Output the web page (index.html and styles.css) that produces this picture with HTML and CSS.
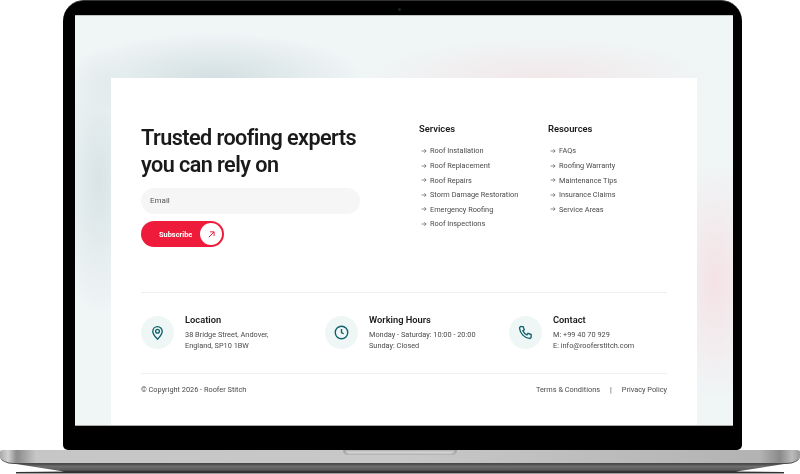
FILE: index.html
```html
<!DOCTYPE html>
<html lang="en">
<head>
<meta charset="utf-8">
<title>Roofer Stitch</title>
<link rel="stylesheet" href="styles.css">
</head>
<body>
<div class="stage">
  <div class="lid">
    <span class="camera"></span>
    <div class="screen">
      <section class="card">
        <div class="top">
          <div class="signup">
            <h1>Trusted roofing experts you can rely on</h1>
            <div class="email">Email</div>
            <div class="subscribe">
              <span class="sub-label">Subscribe</span>
              <span class="sub-icon">
                <svg viewBox="0 0 12 12" width="9" height="9"><path d="M2.500 9.500 9.500 2.500M4 2.500h5.500V8" fill="none" stroke="#ee1c3a" stroke-width="1.300"/></svg>
              </span>
            </div>
          </div>
          <div class="links services">
            <h2>Services</h2>
            <ul>
              <li><svg class="arr" viewBox="0 0 8 8"><path d="M.8 4h6M4.400 1.600 6.800 4 4.400 6.400"/></svg>Roof Installation</li>
              <li><svg class="arr" viewBox="0 0 8 8"><path d="M.8 4h6M4.400 1.600 6.800 4 4.400 6.400"/></svg>Roof Replacement</li>
              <li><svg class="arr" viewBox="0 0 8 8"><path d="M.8 4h6M4.400 1.600 6.800 4 4.400 6.400"/></svg>Roof Repairs</li>
              <li><svg class="arr" viewBox="0 0 8 8"><path d="M.8 4h6M4.400 1.600 6.800 4 4.400 6.400"/></svg>Storm Damage Restoration</li>
              <li><svg class="arr" viewBox="0 0 8 8"><path d="M.8 4h6M4.400 1.600 6.800 4 4.400 6.400"/></svg>Emergency Roofing</li>
              <li><svg class="arr" viewBox="0 0 8 8"><path d="M.8 4h6M4.400 1.600 6.800 4 4.400 6.400"/></svg>Roof Inspections</li>
            </ul>
          </div>
          <div class="links resources">
            <h2>Resources</h2>
            <ul>
              <li><svg class="arr" viewBox="0 0 8 8"><path d="M.8 4h6M4.400 1.600 6.800 4 4.400 6.400"/></svg>FAQs</li>
              <li><svg class="arr" viewBox="0 0 8 8"><path d="M.8 4h6M4.400 1.600 6.800 4 4.400 6.400"/></svg>Roofing Warranty</li>
              <li><svg class="arr" viewBox="0 0 8 8"><path d="M.8 4h6M4.400 1.600 6.800 4 4.400 6.400"/></svg>Maintenance Tips</li>
              <li><svg class="arr" viewBox="0 0 8 8"><path d="M.8 4h6M4.400 1.600 6.800 4 4.400 6.400"/></svg>Insurance Claims</li>
              <li><svg class="arr" viewBox="0 0 8 8"><path d="M.8 4h6M4.400 1.600 6.800 4 4.400 6.400"/></svg>Service Areas</li>
            </ul>
          </div>
        </div>
        <div class="info">
          <div class="info-item">
            <span class="info-icon">
              <svg viewBox="0 0 24 24" width="15" height="15"><path d="M12 22.500c-1-1.500-7.500-6-7.500-12.500a7.500 7.500 0 0 1 15 0c0 6.500-6.500 11-7.500 12.500Z"/><circle cx="12" cy="10" r="3"/></svg>
            </span>
            <div>
              <h3>Location</h3>
              <p>38 Bridge Street, Andover,<br>England, SP10 1BW</p>
            </div>
          </div>
          <div class="info-item">
            <span class="info-icon">
              <svg viewBox="0 0 24 24" width="15" height="15"><circle cx="12" cy="12" r="10"/><path d="M12 6.500V12l3.500 2"/></svg>
            </span>
            <div>
              <h3>Working Hours</h3>
              <p>Monday - Saturday: 10:00 - 20:00<br>Sunday: Closed</p>
            </div>
          </div>
          <div class="info-item">
            <span class="info-icon">
              <svg viewBox="0 0 24 24" width="15" height="15"><path d="M5 2.500h3.200l1.800 5-2.300 1.800a13 13 0 0 0 6.500 6.500l1.800-2.300 5 1.800V19a2.500 2.500 0 0 1-2.800 2.500C10.500 20.800 3.200 13.500 2.500 5.300A2.500 2.500 0 0 1 5 2.500Z"/></svg>
            </span>
            <div>
              <h3>Contact</h3>
              <p>M: +99 40 70 929<br>E: info@rooferstitch.com</p>
            </div>
          </div>
        </div>
        <div class="legal">
          <span>© Copyright 2026 - Roofer Stitch</span>
          <span class="legal-links"><span>Terms &amp; Conditions</span><span>|</span><span>Privacy Policy</span></span>
        </div>
      </section>
    </div>
  </div>
  <div class="base">
    <span class="notch"></span>
  </div>
  <div class="foot"></div>
</div>
</body>
</html>
```
FILE: styles.css
```css
* { box-sizing: border-box; }
html, body { margin: 0; padding: 0; background: #fff; }
body { font-family: Roboto, "Liberation Sans", sans-serif; overflow: hidden; }
.stage { width: 800px; height: 474px; display: flex; flex-direction: column; align-items: flex-start; overflow: hidden; }

.lid {
  position: relative;
  margin-left: 63px;
  width: 679px; height: 450px; flex: none;
  background: #000;
  border-top: 1px solid #333;
  border-radius: 21px 21px 5px 5px;
  padding: 14px 9px 24px 12px;
  display: flex;
}
.camera { position: absolute; top: 7px; left: 335px; width: 3px; height: 3px; border-radius: 50%; background: #1c2326; }
.screen {
  flex: 1;
  min-width: 0;
  padding: 62px 36px 0;
  display: flex;
  border-top: 1px solid #bfc4c4;
  border-bottom: 1px solid #aaa;
  background:
    radial-gradient(ellipse 150px 46px at 140px 63px, rgba(205,219,221,.85), transparent),
    radial-gradient(ellipse 42px 135px at 24px 165px, rgba(200,216,218,.6), transparent),
    radial-gradient(ellipse 170px 42px at 465px 63px, rgba(242,226,228,.7), transparent),
    radial-gradient(ellipse 45px 120px at 640px 265px, rgba(246,218,222,.7), transparent),
    #f0f5f6;
}
.card { flex: 1; min-width: 0; background: #fff; padding: 44px 30px 0; display: flex; flex-direction: column; filter: blur(.3px); }

.top { display: flex; height: 171px; border-bottom: 1px solid #f0f0f0; }
.signup { width: 278px; }
h1 { margin: 2px 0 10px; width: 222px; font-size: 21.600px; line-height: 27px; font-weight: 600; letter-spacing: -.55px; color: #1a1a1a; }
.email { width: 219px; height: 26px; border-radius: 13px; background: #f6f6f6; padding-left: 9px; font-size: 8px; line-height: 25px; color: #555; }
.subscribe {
  margin-top: 7px; width: 83px; height: 26px; border-radius: 13px;
  background: #ee1c3a; display: flex; align-items: center; justify-content: space-between;
  padding: 2px 2px 2px 18px;
}
.sub-label { font-size: 7.400px; font-weight: 700; color: #fff; }
.sub-icon { width: 22px; height: 22px; border-radius: 50%; background: #fff; display: flex; align-items: center; justify-content: center; }

.links h2 { margin: 0 0 7.700px; font-size: 9.400px; line-height: 14px; font-weight: 600; color: #1a1a1a; }
.services { width: 129px; }
.links ul { margin: 0; padding: 0; list-style: none; }
.links li { display: flex; align-items: center; height: 14.600px; font-size: 7.350px; color: #4a4a4a; }
.arr { width: 6px; height: 6px; margin: 0 3px 0 2px; flex: none; }
.arr path { fill: none; stroke: #555; stroke-width: .9; }

.info { display: grid; grid-template-columns: 184px 184px 1fr; padding-top: 23px; height: 81px; border-bottom: 1px solid #f0f0f0; }
.info-item { display: flex; gap: 11px; }
.info-icon { width: 33px; height: 33px; border-radius: 50%; background: #eff6f6; display: flex; align-items: center; justify-content: center; flex: none; }
.info-icon svg { fill: none; stroke: #11626c; stroke-width: 2.200; }
h3 { margin: 0 0 4.500px; font-size: 9.300px; line-height: 8px; font-weight: 600; color: #1a1a1a; }
.info p { margin: 0; font-size: 7.350px; line-height: 11px; color: #4a4a4a; }

.legal { display: flex; justify-content: space-between; align-items: center; padding-top: 10px; font-size: 7.350px; line-height: 11px; color: #4a4a4a; }
.legal-links { display: flex; gap: 10px; }

.base {
  width: 800px; height: 14px; flex: none;
  border-bottom: 1px solid #4a4a4a;
  border-radius: 3px 3px 14px 14px / 2px 2px 8px 8px;
  background: linear-gradient(90deg, #a9a9a9 0, #d2d2d2 1%, #8f8f8f 2%, #8f8f8f 2.300%, #c6c6c6 4.500%, #c8c8c8 50%, #b3b3b3 95%, #8a8a8a 97.500%, #bbb 99%, #999 100%);
  display: flex; justify-content: center;
}
.notch { width: 114px; height: 5px; border-radius: 0 0 5px 5px; background: #cfcfcf; box-shadow: inset 0 -1px 1px #b5b5b5, inset 2px 0 2px #999, inset -2px 0 2px #999; }
.foot { width: 800px; height: 10px; flex: none; background: linear-gradient(#4a4a4a, #6e6e6e 25%, #5a5a5a 60%, #2a2a2a 80%, #444 100%); clip-path: polygon(2% 0, 98% 0, 92% 75%, 98% 80%, 98% 95%, 2% 95%, 2% 80%, 8% 75%); }
```
